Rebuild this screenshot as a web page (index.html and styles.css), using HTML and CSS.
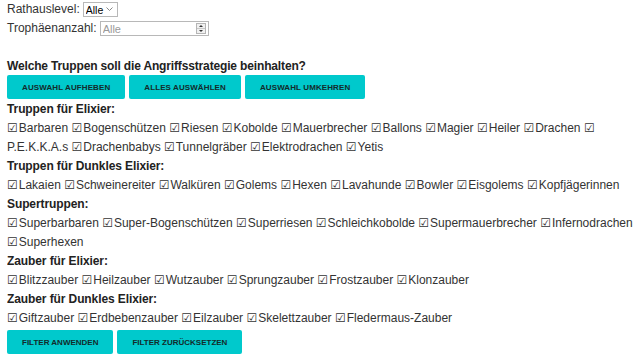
FILE: index.html
```html
<!DOCTYPE html>
<html lang="de">
<head>
    <meta charset="UTF-8">
    <meta name="viewport" content="width=device-width, initial-scale=1.0">
    <title>Angriffsstrategien</title>
    <link rel="stylesheet" href="styles.css">
</head>
<body>
    <form class="filter">
        <div class="field">
            <label for="rathaus">Rathauslevel:</label>
            <span class="select-wrap">
                <select id="rathaus" class="select">
                    <option>Alle</option>
                </select>
                <svg class="chevron" width="7" height="5" viewBox="0 0 7 5"><path d="M0.5 0.5 L3.5 3.5 L6.5 0.5" fill="none" stroke="#888" stroke-width="1"/></svg>
            </span>
        </div>
        <div class="field">
            <label for="trophies">Trophäenanzahl:</label>
            <span class="number-wrap">
                <input type="number" id="trophies" class="number" placeholder="Alle">
                <svg class="spinner" width="10" height="11" viewBox="0 0 10 11">
                    <rect x="0.5" y="0.5" width="9" height="10" fill="#f0f0f0" stroke="#b5b5b5"/>
                    <line x1="1" y1="5.5" x2="9" y2="5.5" stroke="#c8c8c8"/>
                    <path d="M3 4 L5 2 L7 4 Z" fill="#333"/>
                    <path d="M3 7 L5 9 L7 7 Z" fill="#333"/>
                </svg>
            </span>
        </div>

        <h3 class="question">Welche Truppen soll die Angriffsstrategie beinhalten?</h3>
        <div class="actions">
            <button type="button" class="btn">Auswahl aufheben</button>
            <button type="button" class="btn">Alles auswählen</button>
            <button type="button" class="btn">Auswahl umkehren</button>
        </div>

        <h4 class="group">Truppen für Elixier:</h4>
        <div class="items">
            <span class="box">☑</span>Barbaren <span class="box">☑</span>Bogenschützen <span class="box">☑</span>Riesen <span class="box">☑</span>Kobolde <span class="box">☑</span>Mauerbrecher <span class="box">☑</span>Ballons <span class="box">☑</span>Magier <span class="box">☑</span>Heiler <span class="box">☑</span>Drachen <span class="box">☑</span>P.E.K.K.A.s <span class="box">☑</span>Drachenbabys <span class="box">☑</span>Tunnelgräber <span class="box">☑</span>Elektrodrachen <span class="box">☑</span>Yetis
        </div>

        <h4 class="group">Truppen für Dunkles Elixier:</h4>
        <div class="items">
            <span class="box">☑</span>Lakaien <span class="box">☑</span>Schweinereiter <span class="box">☑</span>Walküren <span class="box">☑</span>Golems <span class="box">☑</span>Hexen <span class="box">☑</span>Lavahunde <span class="box">☑</span>Bowler <span class="box">☑</span>Eisgolems <span class="box">☑</span>Kopfjägerinnen
        </div>

        <h4 class="group">Supertruppen:</h4>
        <div class="items">
            <span class="box">☑</span>Superbarbaren <span class="box">☑</span>Super-Bogenschützen <span class="box">☑</span>Superriesen <span class="box">☑</span>Schleichkobolde <span class="box">☑</span>Supermauerbrecher <span class="box">☑</span>Infernodrachen <span class="box">☑</span>Superhexen
        </div>

        <h4 class="group">Zauber für Elixier:</h4>
        <div class="items">
            <span class="box">☑</span>Blitzzauber <span class="box">☑</span>Heilzauber <span class="box">☑</span>Wutzauber <span class="box">☑</span>Sprungzauber <span class="box">☑</span>Frostzauber <span class="box">☑</span>Klonzauber
        </div>

        <h4 class="group">Zauber für Dunkles Elixier:</h4>
        <div class="items">
            <span class="box">☑</span>Giftzauber <span class="box">☑</span>Erdbebenzauber <span class="box">☑</span>Eilzauber <span class="box">☑</span>Skelettzauber <span class="box">☑</span>Fledermaus-Zauber
        </div>

        <div class="actions bottom">
            <button type="submit" class="btn alt">Filter anwenden</button>
            <button type="reset" class="btn alt">Filter zurücksetzen</button>
        </div>
    </form>
</body>
</html>
```

FILE: styles.css
```css
body {
    margin: 0 7px;
    font-family: "Liberation Sans", Arial, sans-serif;
    font-size: 12px;
    line-height: 19px;
    color: #333;
    background: #fff;
}
.field {
    height: 19px;
    display: flex;
    align-items: center;
    gap: 3px;
}
.select-wrap,
.number-wrap {
    position: relative;
    display: inline-flex;
}
.select {
    appearance: none;
    font-family: "Liberation Sans", Arial, sans-serif;
    font-size: 10.5px;
    width: 35px;
    height: 15px;
    padding: 0 0 0 2px;
    border: 1px solid #b8b8b8;
    border-radius: 0;
    color: #000;
    background: #fff;
}
.chevron {
    position: absolute;
    right: 5px;
    top: 5px;
    pointer-events: none;
}
.number {
    appearance: textfield;
    font-family: "Liberation Sans", Arial, sans-serif;
    font-size: 11px;
    width: 109px;
    height: 15px;
    box-sizing: border-box;
    padding: 0 2px;
    border: 1px solid #b8b8b8;
    border-radius: 0;
}
.number::placeholder {
    color: #999;
}
.spinner {
    position: absolute;
    right: 3px;
    top: 2px;
}
.question {
    margin: 19px 0 0;
    font-size: 12px;
    line-height: 19px;
    letter-spacing: -0.15px;
    color: #222;
}
.actions {
    display: flex;
    gap: 4px;
    margin: -1px 0 1px;
}
.btn {
    font-family: "Liberation Sans", Arial, sans-serif;
    font-size: 8px;
    font-weight: bold;
    text-transform: uppercase;
    letter-spacing: 0.1px;
    color: #132b2b;
    background: #00c9cc;
    border: none;
    border-radius: 2px;
    height: 24px;
    padding: 0 15px;
    cursor: pointer;
}
.btn.alt {
    letter-spacing: 0;
}
.group {
    margin: 0;
    font-size: 12px;
    line-height: 19px;
    letter-spacing: -0.1px;
    color: #222;
}
.items {
    line-height: 19px;
}
.box {
    display: inline-block;
    font-family: "DejaVu Sans", sans-serif;
    font-size: 12px;
    margin-right: 1px;
}
.actions.bottom {
    margin: 2px 0 0;
}
```
